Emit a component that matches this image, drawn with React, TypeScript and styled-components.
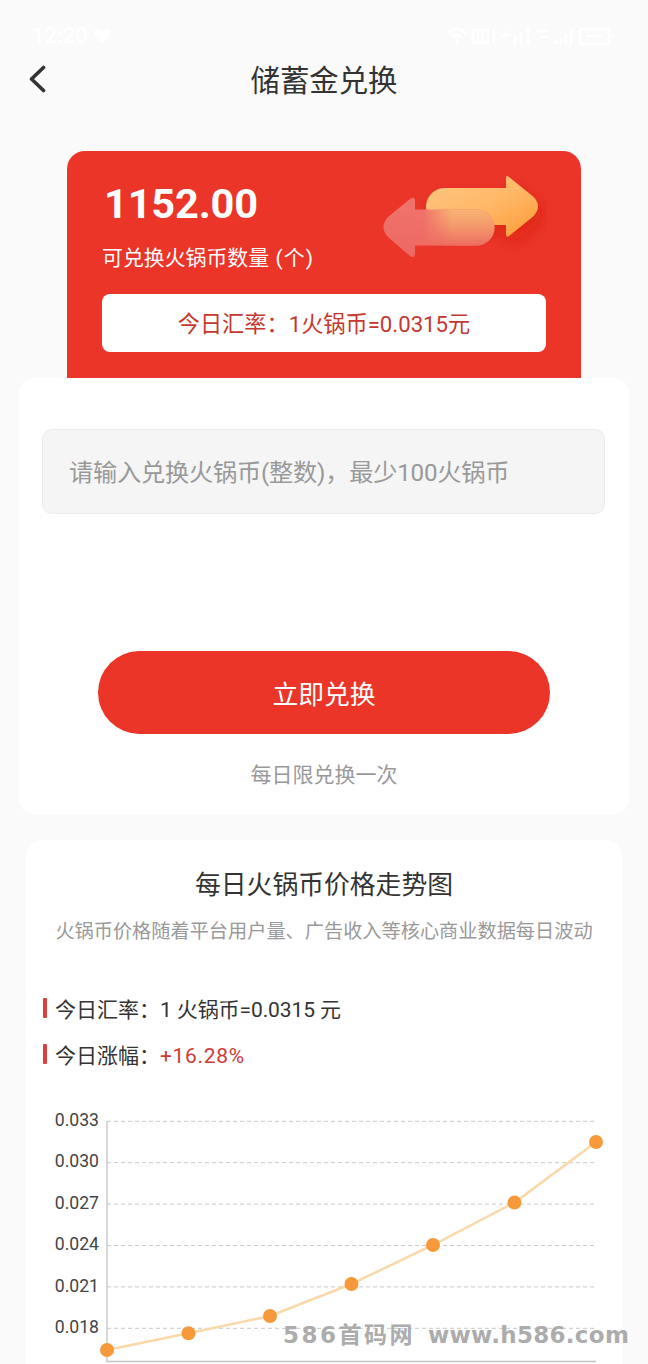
import React from 'react';
import styled, { createGlobalStyle } from 'styled-components';

const GlobalStyle = createGlobalStyle`
  * { box-sizing: border-box; }
  body {
    margin: 0;
    background: #fafafa;
    color: #333;
    font-family: Roboto, "Noto Sans CJK SC", sans-serif;
  }
`;

const Page = styled.div`
  position: relative;
  width: 648px;
  height: 1364px;
  overflow: hidden;
  display: flex;
  flex-direction: column;
  align-items: center;
  background: #fafafa;
`;

const StatusBar = styled.div`
  width: 100%;
  height: 48px;
  flex: none;
  padding: 23px 32px 0;
  display: flex;
  justify-content: space-between;
  color: #fff;
  font-size: 22px;
  font-weight: 500;
  line-height: 25px;
`;

const StatusGroup = styled.div`
  display: flex;
  align-items: center;
  gap: 5px;
`;

const Header = styled.header`
  width: 100%;
  height: 64px;
  flex: none;
  padding: 0 28px;
  display: grid;
  grid-template-columns: 40px 1fr 40px;
  align-items: center;
`;

const BackButton = styled.button`
  width: 20px;
  height: 30px;
  padding: 0;
  border: 0;
  background: none;
  svg { display: block; }
`;

const Title = styled.h1`
  margin: 0;
  padding-top: 2px;
  text-align: center;
  font-size: 29.4px;
  font-weight: 400;
  line-height: 40px;
`;

const BalanceCard = styled.section`
  width: 514px;
  height: 227.5px;
  margin-top: 38.5px;
  padding: 0 35px;
  border-radius: 18px 18px 0 0;
  background: #ea3528;
  color: #fff;
  flex: none;
`;

const BalanceTop = styled.div`
  height: 143.5px;
  display: flex;
  justify-content: space-between;
`;

const BalanceInfo = styled.div`
  padding-top: 29px;
`;

const Amount = styled.div`
  padding-left: 2px;
  font-size: 41.5px;
  font-weight: 700;
  line-height: 48px;
  letter-spacing: -0.15px;
`;

const AmountLabel = styled.div`
  margin-top: 15px;
  font-size: 20.9px;
  line-height: 30px;
  white-space: pre;
`;

const LabelUnit = styled.span`
  letter-spacing: 1.1px;
`;

const Arrows = styled.svg`
  width: 180px;
  height: 110px;
  margin: 14px -1px 0 0;
  flex: none;
`;

const RateBox = styled.div`
  height: 58px;
  padding-bottom: 3px;
  display: flex;
  align-items: center;
  justify-content: center;
  border-radius: 8px;
  background: #fff;
  color: #c5382f;
  font-size: 22.2px;
`;

const ExchangePanel = styled.section`
  width: 610px;
  height: 436px;
  padding: 51px 24px 0;
  display: flex;
  flex-direction: column;
  align-items: center;
  flex: none;
  border-radius: 16px;
  background: #fff;
`;

const AmountInput = styled.input`
  width: 563px;
  height: 85px;
  margin-right: 1px;
  padding: 3px 26px 0;
  border: 1px solid #ebebeb;
  border-radius: 10px;
  background: #f5f5f5;
  font: inherit;
  font-size: 24.2px;
  letter-spacing: -0.2px;
  &::placeholder { color: #999; opacity: 1; }
`;

const SubmitButton = styled.button`
  width: 452px;
  height: 83px;
  margin-top: 137px;
  padding: 0;
  border: 0;
  border-radius: 42px;
  background: #ea3528;
  color: #fff;
  font: inherit;
  font-size: 25.8px;
`;

const LimitNote = styled.p`
  margin: 26px 0 0;
  color: #999;
  font-size: 21px;
  line-height: 30px;
`;

const TrendCard = styled.section`
  width: 596px;
  height: 540px;
  margin-top: 26px;
  flex: none;
  border-radius: 16px 16px 0 0;
  background: #fff;
`;

const TrendTitle = styled.h2`
  margin: 0;
  padding-top: 26px;
  text-align: center;
  font-size: 25.8px;
  font-weight: 400;
  line-height: 38px;
`;

const TrendText = styled.p`
  margin: 14px 0 0;
  text-align: center;
  color: #999;
  font-size: 19.2px;
  line-height: 28px;
  white-space: nowrap;
`;

const Stats = styled.div`
  margin-top: 39.5px;
  padding-left: 17px;
`;

const StatRow = styled.div`
  height: 45.5px;
  display: flex;
  align-items: center;
  font-size: 21px;
  &::before {
    content: "";
    width: 4px;
    height: 20px;
    margin-right: 8px;
    border-radius: 1px;
    background: #db4040;
  }
`;

const StatValue = styled.span<{ $up?: boolean }>`
  color: ${(p) => (p.$up ? '#cf3a35' : '#333')};
  letter-spacing: ${(p) => (p.$up ? '0.7px' : '-0.1px')};
  white-space: pre;
`;

const Chart = styled.svg`
  display: block;
  width: 596px;
  height: 286px;
  margin-top: 1px;
  font-size: 17.6px;
`;

const Watermark = styled.div`
  position: absolute;
  left: 283px;
  top: 1320px;
  display: flex;
  gap: 13px;
  color: #acacac;
  font: 700 23px/30px "DejaVu Sans", "Noto Sans CJK SC", sans-serif;
  letter-spacing: 0.3px;
  white-space: nowrap;
`;

const WatermarkName = styled.span`
  letter-spacing: 2.5px;
`;

const labels = ['0.033', '0.030', '0.027', '0.024', '0.021', '0.018'];
const points = [
  [81, 272], [162.5, 255.2], [244, 238], [325.5, 206], [407, 167], [488.5, 124.6], [570, 64],
];

function StatusIcons() {
  return (
    <svg width="170" height="22" viewBox="0 0 170 22" fill="none" stroke="#fff" strokeWidth="2.4">
      <path d="M2 8Q11 0 20 8M6 12Q11 8 16 12M10 16h2" />
      <path d="M27 5h15v13H27zM32 8v8M37 8v8M48 4v15M55 10h10M60 6v8M69 12v8M75 8v12M82 3v17" />
      <path d="M91 6h12M94 12h9M108 17h4M115 14v6M120 9v11M125 4v16" />
      <rect x="134" y="4" width="29" height="15" rx="3" />
      <path d="M140 11h16M167 9v5" />
    </svg>
  );
}

function ExchangeArrows() {
  return (
    <Arrows viewBox="0 0 180 110">
      <defs>
        <linearGradient id="gold" x1="0" y1="0" x2="1" y2="1">
          <stop offset="0" stopColor="#ffc680" />
          <stop offset="0.5" stopColor="#ffb969" />
          <stop offset="1" stopColor="#ff9a36" />
        </linearGradient>
        <linearGradient id="pink" x1="0" y1="0" x2="0" y2="1">
          <stop offset="0" stopColor="#f0746c" />
          <stop offset="1" stopColor="#ee6863" />
        </linearGradient>
        <linearGradient id="glass" x1="0" y1="0" x2="0" y2="1">
          <stop offset="0" stopColor="#f8b474" />
          <stop offset="0.45" stopColor="#f49a6c" />
          <stop offset="1" stopColor="#ee6d62" />
        </linearGradient>
        <linearGradient id="fade" gradientUnits="userSpaceOnUse" x1="55" y1="0" x2="85" y2="0">
          <stop offset="0" stopColor="#fff" stopOpacity="0" />
          <stop offset="1" stopColor="#fff" />
        </linearGradient>
        <mask id="fadeMask">
          <rect width="180" height="110" fill="url(#fade)" />
        </mask>
        <filter id="shadow" x="-30%" y="-30%" width="170%" height="190%">
          <feDropShadow dx="4" dy="8" stdDeviation="7" floodColor="#d81505" floodOpacity="0.5" />
        </filter>
      </defs>
      <path
        filter="url(#shadow)"
        fill="url(#gold)"
        d="M77.500 23H139V13Q139 9.500 142 12L166 31.500Q176 41 166 51.500L142 71Q139 73 139 69V60H77.500A18.500 18.500 0 0 1 77.500 23Z"
      />
      <path fill="url(#pink)" d="M109.500 44.500H48V36Q48 30.500 43 34L21 52Q12 62 21 72L43 91Q48 94 48 88V80.500H109.500A18 18 0 0 0 109.500 44.500Z" />
      <path mask="url(#fadeMask)" fill="url(#glass)" d="M109.500 44.500H48V80.500H109.500A18 18 0 0 0 109.500 44.500Z" />
    </Arrows>
  );
}

function PriceChart() {
  return (
    <Chart viewBox="0 0 596 286">
      {labels.map((label, i) => (
        <g key={label}>
          <text x="73" y={48 + i * 41.4} textAnchor="end" fill="#444">{label}</text>
          <path d={`M81 ${43.3 + i * 41.4}H570`} stroke="#c8c8c8" strokeDasharray="4 3" />
        </g>
      ))}
      <path d="M81 43V283.500H570" fill="none" stroke="#c4c4c4" strokeWidth="1.300" />
      <polyline points={points.map((p) => p.join(',')).join(' ')} fill="none" stroke="#f9d9a8" strokeWidth="2.500" />
      {points.map(([x, y]) => <circle key={x} cx={x} cy={y} r="7" fill="#f5993a" />)}
    </Chart>
  );
}

export default function App() {
  return (
    <Page>
      <GlobalStyle />
      <StatusBar>
        <StatusGroup>
          <span>12:20</span>
          <svg width="18" height="16" viewBox="0 0 18 16" fill="#fff"><path d="M9 15L1 7Q0 1 5 1L9 4L13 1Q18 1 17 7Z" /></svg>
        </StatusGroup>
        <StatusGroup><StatusIcons /></StatusGroup>
      </StatusBar>
      <Header>
        <BackButton aria-label="返回">
          <svg width="20" height="30" viewBox="0 0 20 30" fill="none" stroke="#333" strokeWidth="3.600" strokeLinecap="round" strokeLinejoin="round">
            <path d="M15.500 2.500L3.500 14L15.500 25.500" />
          </svg>
        </BackButton>
        <Title>储蓄金兑换</Title>
      </Header>
      <BalanceCard>
        <BalanceTop>
          <BalanceInfo>
            <Amount>1152.00</Amount>
            <AmountLabel>可兑换火锅币数量<LabelUnit> (个)</LabelUnit></AmountLabel>
          </BalanceInfo>
          <ExchangeArrows />
        </BalanceTop>
        <RateBox>今日汇率：1火锅币=0.0315元</RateBox>
      </BalanceCard>
      <ExchangePanel>
        <AmountInput placeholder="请输入兑换火锅币(整数)，最少100火锅币" />
        <SubmitButton>立即兑换</SubmitButton>
        <LimitNote>每日限兑换一次</LimitNote>
      </ExchangePanel>
      <TrendCard>
        <TrendTitle>每日火锅币价格走势图</TrendTitle>
        <TrendText>火锅币价格随着平台用户量、广告收入等核心商业数据每日波动</TrendText>
        <Stats>
          <StatRow><span>今日汇率：<StatValue>1 火锅币=0.0315 元</StatValue></span></StatRow>
          <StatRow><span>今日涨幅：<StatValue $up>+16.28%</StatValue></span></StatRow>
        </Stats>
        <PriceChart />
      </TrendCard>
      <Watermark>
        <WatermarkName>586首码网</WatermarkName>
        <span>www.h586.com</span>
      </Watermark>
    </Page>
  );
}
